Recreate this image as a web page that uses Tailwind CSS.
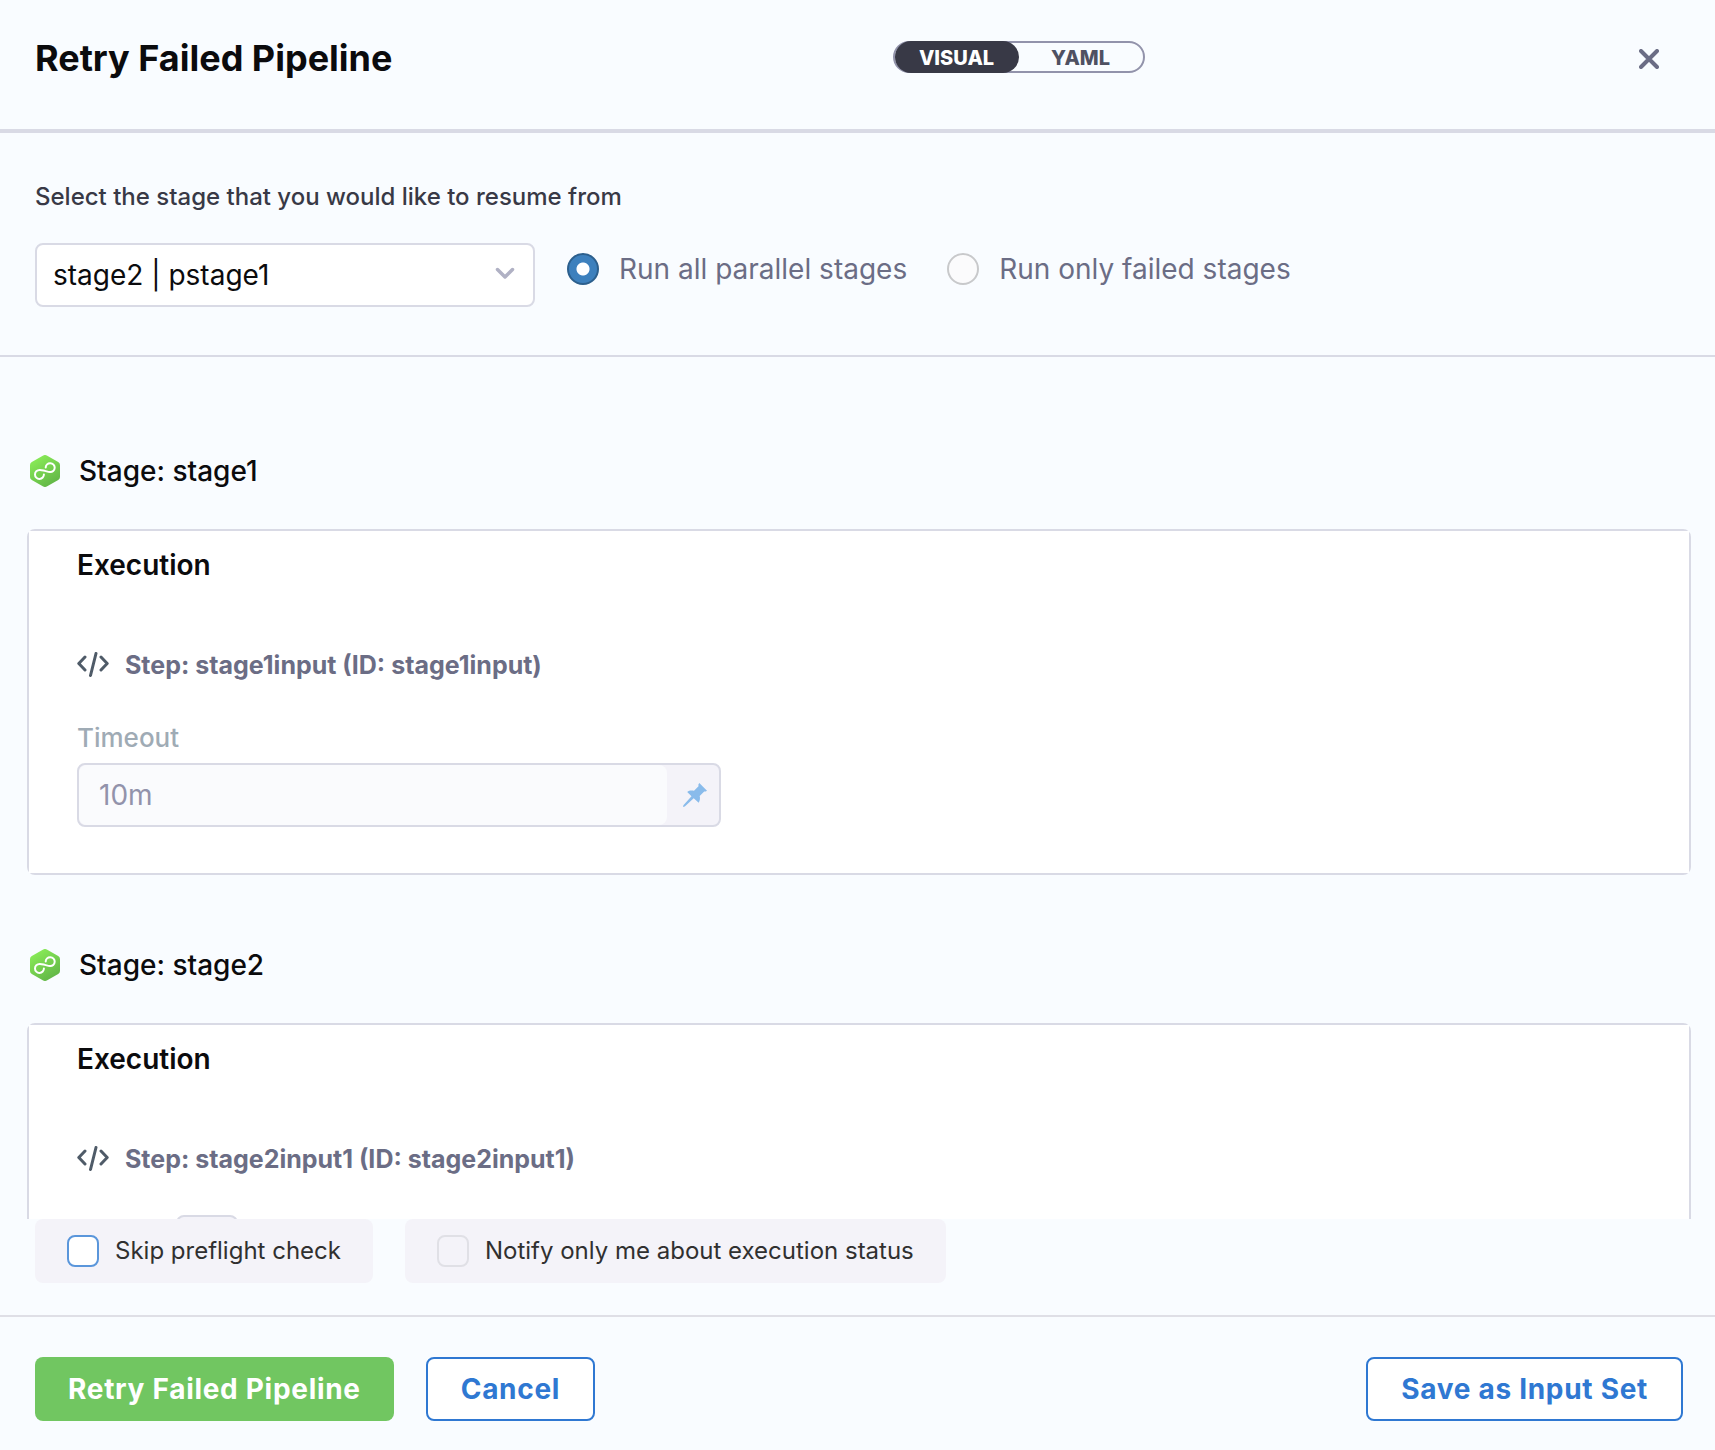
<!DOCTYPE html>
<html lang="en">
<head>
    <meta charset="UTF-8">
    <meta name="viewport" content="width=device-width, initial-scale=1.0">
    <title>Retry Failed Pipeline</title>
    <script src="https://cdn.jsdelivr.net/npm/@tailwindcss/browser@4"></script>
</head>
<body class="bg-[#f9fcff] font-['Inter',sans-serif] text-[#0b0b0d]">

  <!-- shared icons -->
  <svg class="absolute size-0" aria-hidden="true">
    <defs>
      <linearGradient id="ciGreen" x1="0.2" y1="0" x2="0.8" y2="1">
        <stop offset="0" stop-color="#8bee58"/>
        <stop offset="1" stop-color="#5fb246"/>
      </linearGradient>
    </defs>
    <symbol id="icon-stage" viewBox="0 0 30 32">
      <path fill="url(#ciGreen)" d="M13.2.5a3.6 3.6 0 0 1 3.6 0l11.400 6.400A3.600 3.600 0 0 1 30 10v12a3.600 3.600 0 0 1-1.800 3.100l-11.400 6.400a3.600 3.600 0 0 1-3.600 0L1.800 25.100A3.600 3.600 0 0 1 0 22V10a3.600 3.600 0 0 1 1.800-3.100z"/>
      <path fill="none" stroke="#fff" stroke-width="2" stroke-linecap="round" d="M15.700 12.600C15.700 10 17.800 8.100 20.300 8.200c2.600.1 4.500 2.100 4.400 4.600-.1 2.700-2.300 4.500-4.800 4.300-1.900-.1-3.200-.8-4.900-1.200-1.700-.4-3.500-1.100-5.300-1-2.700.1-4.700 2-4.700 4.500 0 2.600 2 4.600 4.500 4.500 2.600-.1 4.500-2 4.400-4.500"/>
    </symbol>
    <symbol id="icon-code" viewBox="0 0 32 26">
      <path fill="none" stroke="#4f5b68" stroke-width="3" stroke-linecap="round" stroke-linejoin="round" d="M8 5 1.800 11.500 8 18M24 5l6.200 6.500L24 18M19 1.500l-5.500 22"/>
    </symbol>
  </svg>

  <div class="flex flex-col h-screen">
    <header class="flex items-start h-[133px] shrink-0 border-b-4 border-[#d9dae5]">
      <div class="w-1/2 pl-[35px] pt-9">
        <h1 class="text-[36px] leading-[44px] font-bold whitespace-nowrap">Retry Failed Pipeline</h1>
      </div>
      <div class="w-1/2 flex justify-between items-start pl-[35px] pr-10 pt-[41px]">
        <div class="flex h-8 w-[252px] rounded-full border-2 border-[#9293ab] text-[20px] font-extrabold">
          <button type="button" class="-my-0.5 w-[124px] pt-0.5 rounded-full bg-[#383946] text-white">VISUAL</button>
          <button type="button" class="-my-0.5 flex-1 pt-0.5 text-[#4f5162]">YAML</button>
        </div>
        <button type="button" aria-label="Close" class="flex items-center justify-center size-[52px] -mt-2">
          <svg class="size-5" viewBox="0 0 20 20" fill="none" stroke="#6b6d85" stroke-width="4" stroke-linecap="round"><path d="M2 2l16 16M18 2 2 18"/></svg>
        </button>
      </div>
    </header>

    <section class="shrink-0 px-[35px] pt-12 pb-12 border-b-2 border-[#d9dae5]">
      <label for="stageSelect" class="block text-[24px] leading-8 font-medium text-[#383946]">Select the stage that you would like to resume from</label>
      <div class="flex items-start mt-[30px]">
        <div class="relative w-[500px]">
          <select id="stageSelect" class="appearance-none w-full h-16 px-4 rounded-lg border-2 border-[#d9dae5] bg-white text-[28px]">
            <option>stage2 | pstage1</option>
          </select>
          <svg class="absolute right-5 top-6 w-5 h-3 pointer-events-none" viewBox="0 0 20 12" fill="none" stroke="#b0b1c4" stroke-width="3.500" stroke-linecap="round" stroke-linejoin="round"><path d="M2.500 2.500 10 10l7.500-7.500"/></svg>
        </div>
        <div class="flex gap-10 ml-8 mt-2 text-[28px] leading-9 text-[#6b6d85]">
          <label class="flex items-center gap-5">
            <input type="radio" name="runMode" checked class="appearance-none size-8 rounded-full border-2 border-[#2c5f8d] bg-radial from-white from-[6px] to-[#3d80bd] to-[7px]">
            Run all parallel stages
          </label>
          <label class="flex items-center gap-5">
            <input type="radio" name="runMode" class="appearance-none size-8 rounded-full border-2 border-[#c8c9cb] bg-[#fbfbfc]">
            Run only failed stages
          </label>
        </div>
      </div>
    </section>

    <main class="flex-1 min-h-0 overflow-y-auto [scrollbar-width:none] pl-[27px] pr-6 pt-24">
      <section>
        <h2 class="flex items-center gap-[19px] pl-[3px] text-[28px] leading-9 font-medium">
          <svg class="w-[30px] h-8"><use href="#icon-stage"/></svg>
          Stage: stage1
        </h2>
        <div class="mt-10 h-[346px] rounded-lg border-2 border-[#d9dae5]">
          <div class="h-full bg-white px-12 pt-4">
            <h3 class="text-[28px] leading-9 font-semibold">Execution</h3>
            <div class="flex items-center gap-4 mt-16 text-[25px] leading-9 font-bold text-[#6b6d85]">
              <svg class="w-8 h-[26px]"><use href="#icon-code"/></svg>
              Step: stage1input (ID: stage1input)
            </div>
            <label for="timeout" class="block mt-[37px] text-[26px] leading-9 font-medium text-[#9fabb5]">Timeout</label>
            <div class="flex mt-[7px] w-[644px] h-16 rounded-lg border-2 border-[#d9dae5] bg-[#f4f3f9]">
              <input id="timeout" type="text" value="10m" disabled class="flex-1 min-w-0 h-full pl-5 rounded-lg bg-[#fafbfd] text-[28px] text-[#9293ab]">
              <button type="button" aria-label="Fixed value" class="flex items-center justify-center w-[52px] h-full pl-1">
                <svg class="size-6" viewBox="0 0 24 24"><path fill="#89bbeb" d="M16.300 0 24 7.700l-1.300.8-1.500-.1-4.500 4.700c.6 2.500.3 4.600-1 6.700l-5-4.500L1.800 23.600 0 24l.4-1.800 8.100-8.900L4.200 9c2-1.600 4.300-1.800 6.800-1.200l4.500-4.500-.1-1.700z"/></svg>
              </button>
            </div>
          </div>
        </div>
      </section>

      <section class="mt-[72px]">
        <h2 class="flex items-center gap-[19px] pl-[3px] text-[28px] leading-9 font-medium">
          <svg class="w-[30px] h-8"><use href="#icon-stage"/></svg>
          Stage: stage2
        </h2>
        <div class="mt-10 h-[346px] rounded-lg border-2 border-[#d9dae5]">
          <div class="h-full bg-white px-12 pt-4">
            <h3 class="text-[28px] leading-9 font-semibold">Execution</h3>
            <div class="flex items-center gap-4 mt-16 text-[25px] leading-9 font-bold text-[#6b6d85]">
              <svg class="w-8 h-[26px]"><use href="#icon-code"/></svg>
              Step: stage2input1 (ID: stage2input1)
            </div>
            <div class="mt-[38px] ml-[99px] w-[62px] h-8 rounded-lg border-2 border-[#d9dae5] bg-[#f4f3f9]"></div>
          </div>
        </div>
      </section>
    </main>

    <div class="flex gap-8 shrink-0 px-[35px] pb-8 text-[24px] text-[#303030]">
      <label class="flex items-center gap-4 h-16 px-8 rounded-lg bg-[#f4f3f9]">
        <input type="checkbox" class="appearance-none size-8 rounded-lg border-2 border-[#5a96db] bg-white">
        Skip preflight check
      </label>
      <label class="flex items-center gap-4 h-16 px-8 rounded-lg bg-[#f4f3f9]">
        <input type="checkbox" class="appearance-none size-8 rounded-lg border-2 border-[#e0e0e6]">
        Notify only me about execution status
      </label>
    </div>

    <footer class="flex gap-8 shrink-0 pl-[35px] pr-8 pt-10 pb-[29px] border-t-2 border-[#dfdfe6] text-[28px] font-bold tracking-wide">
      <button type="button" class="h-16 px-[33px] rounded-lg bg-[#71c661] text-white">Retry Failed Pipeline</button>
      <button type="button" class="h-16 px-[33px] rounded-lg border-2 border-[#2f78d2] bg-white text-[#2f78d2]">Cancel</button>
      <button type="button" class="ml-auto h-16 px-[33px] rounded-lg border-2 border-[#2f78d2] bg-white text-[#2f78d2]">Save as Input Set</button>
    </footer>
  </div>
</body>
</html>
